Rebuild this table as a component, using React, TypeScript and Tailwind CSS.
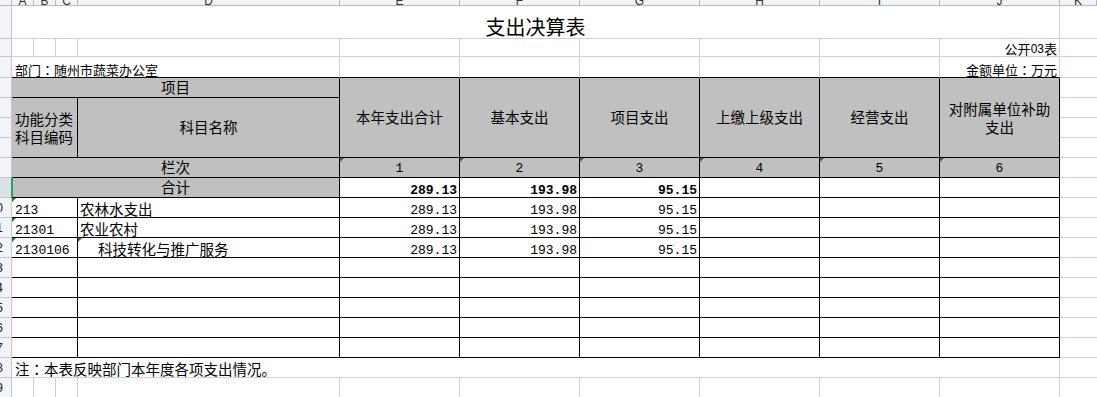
import React from "react";

const CJK = "font-['Noto_Sans_CJK_SC','Noto_Sans',sans-serif]";
const NUM = "font-['Liberation_Mono','Noto_Sans_CJK_SC',monospace]";

// gridline cell / table cell
const G = "border-r border-b border-[#cdd1db] overflow-hidden whitespace-nowrap flex";
const B = "border-r border-b border-black overflow-hidden whitespace-nowrap flex";
const GRAY = "bg-[#c0c0c0]";

const letters = ["A", "B", "C", "D", "E", "F", "G", "H", "I", "J", "K"];

const dataRows = [
  { n: 10, code: "213", name: "农林水支出", v: ["289.13", "193.98", "95.15"] },
  { n: 11, code: "21301", name: "农业农村", v: ["289.13", "193.98", "95.15"] },
  { n: 12, code: "2130106", name: "科技转化与推广服务", indent: true, v: ["289.13", "193.98", "95.15"] },
  { n: 13 },
  { n: 14 },
  { n: 15 },
  { n: 16 },
  { n: 17 },
];

// full-width colon, centred like the sheet's font
function Colon() {
  return <span className="font-['Noto_Sans_CJK_TC',sans-serif]">：</span>;
}

function Tri() {
  return (
    <span className="absolute left-0 top-0 border-t-[4px] border-r-[4px] border-t-[#1c7d1c] border-r-transparent" />
  );
}

function RowHead({ n, active }: { n: number; active?: boolean }) {
  if (active) {
    return (
      <div className="bg-[#dde0e7] border-r border-b border-r-[#21a35a] border-b-[#bfc3cd] flex items-center justify-end pr-[8px] overflow-hidden text-[13px] leading-none text-[#222] font-['Liberation_Sans',sans-serif]">
        {n >= 10 ? n : ""}
      </div>
    );
  }
  return (
    <div className="bg-[#f3f4f7] border-r border-b border-[#c3c7d1] flex items-center justify-end pr-[8px] overflow-hidden text-[13px] leading-none text-[#222] font-['Liberation_Sans',sans-serif]">
      {n >= 10 ? n : ""}
    </div>
  );
}

function Side() {
  return <div className="border-b border-[#cdd1db]" />;
}

function Num({ v, bold }: { v?: string; bold?: boolean }) {
  return (
    <div className={`${B} items-end justify-end pr-[2px] ${NUM} text-[13px] leading-[13px] ${bold ? "font-bold" : ""}`}>
      {v}
    </div>
  );
}

export default function App() {
  return (
    <div className={`w-[1097px] h-[397px] overflow-hidden bg-white text-black ${CJK}`}>
      <div className="grid grid-cols-[12px_22px_22px_22px_262px_120px_120px_120px_120px_120px_120px_1fr] grid-rows-[6px_33px_18px_21px_repeat(16,20px)]">
        {/* column letters */}
        <div className="bg-[#f3f4f7] border-r border-b border-[#b4b8c3]" />
        {letters.map((l) => (
          <div
            key={l}
            className="bg-[#f3f4f7] border-r border-b border-[#b4b8c3] flex items-end justify-center overflow-hidden"
          >
            <span className="text-[12px] leading-[9px] translate-y-[1px] text-[#333] font-['Liberation_Sans',sans-serif]">{l}</span>
          </div>
        ))}

        {/* row 1: title */}
        <RowHead n={1} />
        <div className={`${G} col-span-10 items-end justify-center pb-[1px] text-[20px] leading-none`}>支出决算表</div>
        <Side />

        {/* row 2 */}
        <RowHead n={2} />
        {[0, 1, 2, 3, 4, 5, 6, 7, 8].map((i) => (
          <div key={i} className={G} />
        ))}
        <div className={`${G} items-end justify-end pr-[2px] pb-[1px] text-[13px] leading-none`}>
          公开<span className="font-['Liberation_Sans',sans-serif] text-[12px]">03</span>表
        </div>
        <Side />

        {/* row 3 */}
        <RowHead n={3} />
        <div className="col-span-4 border-r border-b border-r-[#cdd1db] border-b-black flex items-end pl-[3px] pb-[1px] text-[13px] leading-none whitespace-nowrap">
          部门<Colon />随州市蔬菜办公室
        </div>
        {[0, 1, 2, 3, 4].map((i) => (
          <div key={i} className="border-r border-b border-r-[#cdd1db] border-b-black" />
        ))}
        <div className="border-r border-b border-r-[#cdd1db] border-b-black flex items-end justify-end pr-[2px] pb-[1px] text-[13px] leading-none whitespace-nowrap">
          金额单位<Colon />万元
        </div>
        <Side />

        {/* row 4 */}
        <RowHead n={4} />
        <div className={`${B} ${GRAY} col-span-4 items-center justify-center text-[14.5px] leading-none`}>项目</div>
        {["本年支出合计", "基本支出", "项目支出", "上缴上级支出", "经营支出"].map((h) => (
          <div key={h} className={`${B} ${GRAY} row-span-4 items-center justify-center text-[14.5px] leading-none`}>
            {h}
          </div>
        ))}
        <div className={`${B} ${GRAY} row-span-4 items-center justify-center text-center text-[14.5px] leading-[18px]`}>
          对附属单位补助
          <br />
          支出
        </div>
        <Side />

        {/* rows 5-7 */}
        <RowHead n={5} />
        <div className={`${B} ${GRAY} col-span-3 row-span-3 items-center pl-[3px] text-[14.5px] leading-[18px]`}>
          功能分类
          <br />
          科目编码
        </div>
        <div className={`${B} ${GRAY} row-span-3 items-center justify-center text-[14.5px] leading-none`}>科目名称</div>
        <Side />
        <RowHead n={6} />
        <Side />
        <RowHead n={7} />
        <Side />

        {/* row 8 */}
        <RowHead n={8} />
        <div className={`${B} ${GRAY} col-span-4 items-center justify-center text-[14.5px] leading-none`}>栏次</div>
        {["1", "2", "3", "4", "5", "6"].map((c) => (
          <div key={c} className={`${B} ${GRAY} relative items-end justify-center pb-[2px] ${NUM} text-[13px] leading-none`}>
            <Tri />
            {c}
          </div>
        ))}
        <Side />

        {/* row 9 */}
        <RowHead n={9} active />
        <div className={`${B} ${GRAY} col-span-4 items-center justify-center text-[14.5px] leading-none shadow-[inset_1px_0_0_#21a35a]`}>
          合计
        </div>
        <Num v="289.13" bold />
        <Num v="193.98" bold />
        <Num v="95.15" bold />
        <Num />
        <Num />
        <Num />
        <Side />

        {/* rows 10-17 */}
        {dataRows.map((r) => (
          <React.Fragment key={r.n}>
            <RowHead n={r.n} />
            <div className={`${B} col-span-3 relative items-end pl-[3px] ${NUM} text-[13px] leading-[13px]`}>
              {r.code && <Tri />}
              {r.code}
            </div>
            <div className={`${B} relative items-end pb-[1px] text-[14.5px] leading-none ${r.indent ? "pl-[20px]" : "pl-[2px]"}`}>
              {r.indent && <Tri />}
              {r.name}
            </div>
            <Num v={r.v?.[0]} />
            <Num v={r.v?.[1]} />
            <Num v={r.v?.[2]} />
            <Num />
            <Num />
            <Num />
            <Side />
          </React.Fragment>
        ))}

        {/* row 18: note */}
        <RowHead n={18} />
        <div className={`${G} col-span-10 items-end pl-[3px] pb-[1px] text-[14.5px] leading-none`}>
          注<Colon />本表反映部门本年度各项支出情况。
        </div>
        <Side />

        {/* row 19 */}
        <RowHead n={19} />
        {[0, 1, 2, 3, 4, 5, 6, 7, 8, 9].map((i) => (
          <div key={i} className={G} />
        ))}
        <Side />
      </div>
    </div>
  );
}
